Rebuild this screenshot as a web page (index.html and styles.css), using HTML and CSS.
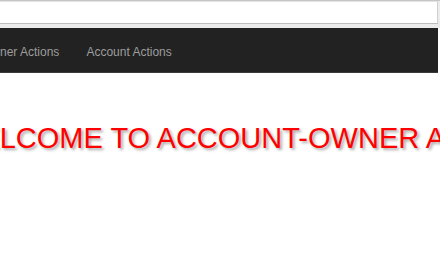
FILE: index.html
```html
<!DOCTYPE html>
<html lang="en">
<head>
    <meta charset="UTF-8">
    <title>Account Owner</title>
    <link rel="stylesheet" href="styles.css">
</head>
<body>
    <div class="topbar">
        <div class="address"></div>
    </div>
    <nav class="navbar">
        <a class="nav-link" href="#">Owner Actions</a>
        <a class="nav-link" href="#">Account Actions</a>
    </nav>
    <div class="content">
        <h1 class="welcome">WELCOME TO ACCOUNT-OWNER ACTIONS</h1>
    </div>
</body>
</html>
```

FILE: styles.css
```css
* {
    margin: 0;
    padding: 0;
    box-sizing: border-box;
}
body {
    font-family: "Liberation Sans", Arial, sans-serif;
    background-color: white;
    overflow: hidden;
    width: 440px;
}
.topbar {
    height: 28px;
    background-color: #ececec;
    border-top: 1px solid #c6c6c6;
}
.address {
    height: 23px;
    margin-right: 2px;
    background-color: white;
    border-top: 1px solid #e4e4e4;
    border-bottom: 1px solid #bdbdbd;
    border-right: 1px solid #d0d0d0;
}
.navbar {
    display: flex;
    height: 45px;
    align-items: center;
    padding-top: 3px;
    background-color: #222222;
    border-bottom: 1px solid #3a3a3a;
    margin-left: -33px;
    margin-right: 2px;
}
.nav-link {
    font-size: 12px;
    color: #9d9d9d;
    text-decoration: none;
    padding: 0 12px 0 15px;
}
.content {
    margin-left: -47px;
    padding-top: 49px;
    white-space: nowrap;
}
.welcome {
    font-size: 29px;
    font-weight: normal;
    color: red;
    text-shadow: 2px 2px 3px rgba(0, 0, 0, 0.35);
}
```
